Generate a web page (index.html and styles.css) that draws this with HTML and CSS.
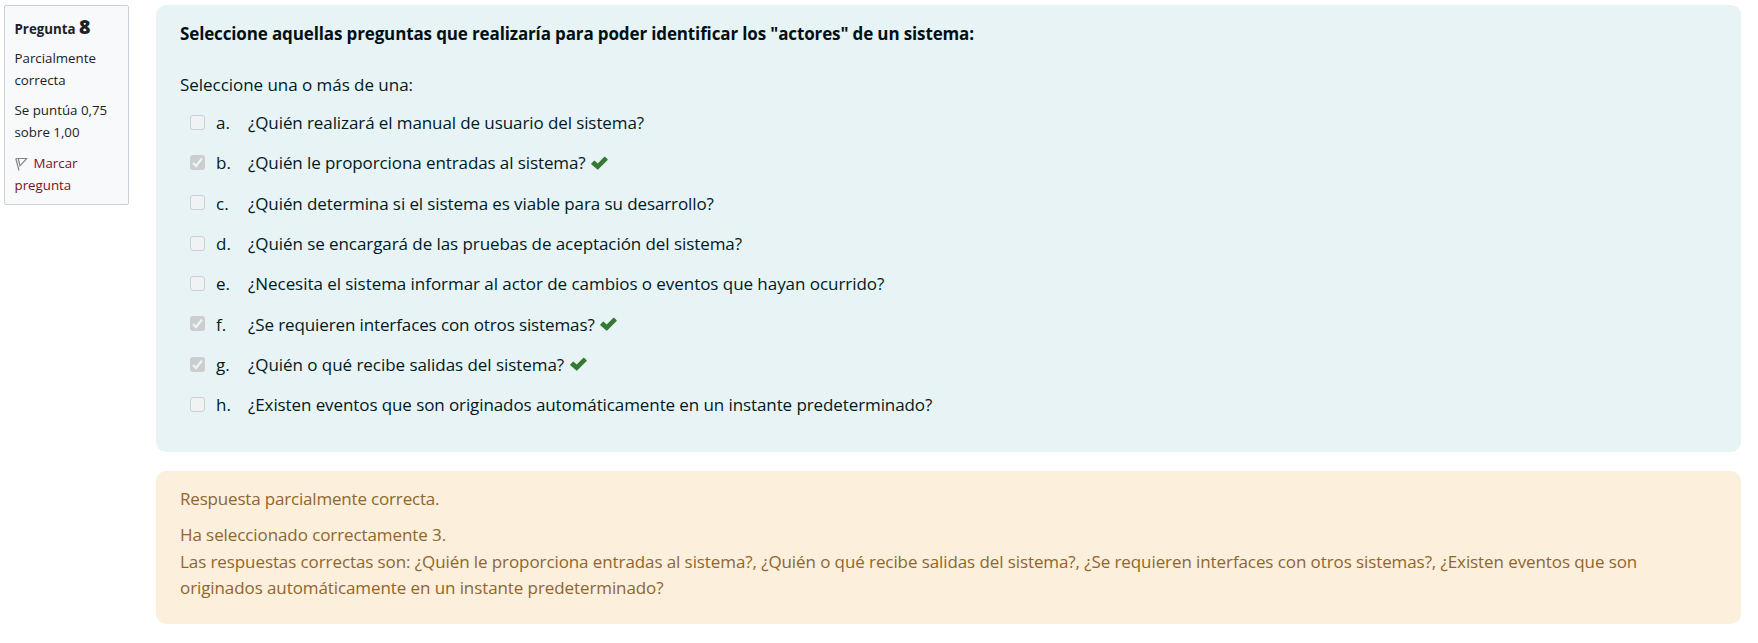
FILE: index.html
```
<!DOCTYPE html>
<html lang="es">
<head>
<meta charset="utf-8">
<title>Pregunta 8</title>
<link rel="stylesheet" href="styles.css">
</head>
<body>
<svg class="defs" width="0" height="0" aria-hidden="true">
  <symbol id="check" viewBox="0 0 17 14"><path d="M.5 7.200 2.700 4.900a.9.9 0 0 1 1.300 0L6.700 7.500 13.100 1a.9.9 0 0 1 1.300 0l2 2a.9.9 0 0 1 0 1.300L7.400 13.300a.9.9 0 0 1-1.300 0L.5 8.500a.9.9 0 0 1 0-1.300z"/></symbol>
</svg>
<main class="question">
  <aside class="info">
    <h3 class="number">Pregunta <b class="qno">8</b></h3>
    <p class="state">Parcialmente<br>correcta</p>
    <p class="grade">Se puntúa 0,75<br>sobre 1,00</p>
    <a class="flag"><svg class="flag-icon" viewBox="0 0 13 14"><path d="M.8 1.500 4 13.500M.8 1.500H11.800L5 8.800 3.300 2"/></svg>Marcar<br>pregunta</a>
  </aside>
  <section class="content">
    <div class="formulation">
      <h4 class="qtext">Seleccione aquellas preguntas que realizaría para poder identificar los "actores" de un sistema:</h4>
      <p class="prompt">Seleccione una o más de una:</p>
      <ul class="answers">
        <li class="answer"><i class="box"></i><span class="letter">a.</span><span class="text">¿Quién realizará el manual de usuario del sistema?</span></li>
        <li class="answer"><i class="box on"><svg viewBox="0 0 15 15"><path d="M3 8 6 11 12 3.500"/></svg></i><span class="letter">b.</span><span class="text">¿Quién le proporciona entradas al sistema?</span><svg class="ok"><use href="#check"/></svg></li>
        <li class="answer"><i class="box"></i><span class="letter">c.</span><span class="text">¿Quién determina si el sistema es viable para su desarrollo?</span></li>
        <li class="answer"><i class="box"></i><span class="letter">d.</span><span class="text loose">¿Quién se encargará de las pruebas de aceptación del sistema?</span></li>
        <li class="answer"><i class="box"></i><span class="letter">e.</span><span class="text looser">¿Necesita el sistema informar al actor de cambios o eventos que hayan ocurrido?</span></li>
        <li class="answer"><i class="box on"><svg viewBox="0 0 15 15"><path d="M3 8 6 11 12 3.500"/></svg></i><span class="letter">f.</span><span class="text tight">¿Se requieren interfaces con otros sistemas?</span><svg class="ok"><use href="#check"/></svg></li>
        <li class="answer"><i class="box on"><svg viewBox="0 0 15 15"><path d="M3 8 6 11 12 3.500"/></svg></i><span class="letter">g.</span><span class="text looser">¿Quién o qué recibe salidas del sistema?</span><svg class="ok"><use href="#check"/></svg></li>
        <li class="answer"><i class="box"></i><span class="letter">h.</span><span class="text">¿Existen eventos que son originados automáticamente en un instante predeterminado?</span></li>
      </ul>
    </div>
    <div class="feedback">
      <p class="result">Respuesta parcialmente correcta.</p>
      <p class="detail">Ha seleccionado correctamente 3.<br>Las respuestas correctas son: ¿Quién le proporciona entradas al sistema?, ¿Quién o qué recibe salidas del sistema?, ¿Se requieren interfaces con otros sistemas?, ¿Existen eventos que son<br>originados automáticamente en un instante predeterminado?</p>
    </div>
  </section>
</main>
</body>
</html>
```
FILE: styles.css
```
* { box-sizing: border-box; margin: 0; padding: 0; }
body {
  width: 1758px;
  height: 643px;
  overflow: hidden;
  background: #fff;
  color: #001a1e;
  font: 17px/27px "Segoe UI", "Open Sans", "Noto Sans", sans-serif;
}
.defs { display: block; }
.question { display: flex; align-items: flex-start; gap: 27px; padding: 5px 17px 0 4px; }
.info {
  width: 125px;
  height: 200px;
  padding: 8px 9.500px 0;
  border: 1px solid #cad0d7;
  border-radius: 2px;
  background: #f8f9fa;
  color: #1d2125;
  font-size: 13.3px;
  line-height: 21.500px;
  white-space: nowrap;
}
.number { font-size: 13.3px; line-height: 26px; font-weight: 700; }
.qno { font-size: 19.500px; }
.state { margin-top: 6px; }
.grade { margin-top: 9px; }
.flag { display: block; margin-top: 10px; color: #7d1022; }
.flag-icon { width: 13px; height: 14px; margin-right: 6px; vertical-align: -3px; fill: none; stroke: #858585; stroke-width: 1.2; }
.content { flex: 1; display: flex; flex-direction: column; gap: 19px; }
.formulation, .feedback { padding-left: 24px; border-radius: 10px; white-space: nowrap; }
.formulation { height: 447px; padding-top: 15px; background: #e7f3f5; }
.qtext { font-size: 17px; line-height: 27px; font-weight: 700; letter-spacing: -.135px; color: #001014; }
.prompt { margin-top: 24px; letter-spacing: -.04px; }
.answers { list-style: none; margin-top: 4.400px; }
.answer { display: flex; align-items: center; height: 40.35px; padding-left: 10px; }
.box { width: 15px; height: 15px; margin: 0 11px .8px 0; border: 1px solid #cdd0d1; border-radius: 3px; background: #eff3f4; }
.box.on { border: 0; background: #cbcdce; }
.box svg { display: block; width: 15px; height: 15px; fill: none; stroke: #eff3f4; stroke-width: 2.200; }
.letter { width: 32px; }
.text { letter-spacing: -.095px; }
.text.tight { letter-spacing: -.115px; }
.text.loose { letter-spacing: -.07px; }
.text.looser { letter-spacing: -.05px; }
.ok { width: 17px; height: 14px; margin: 0 0 .5px 5.500px; fill: #357a32; }
.feedback { height: 153px; padding-top: 14.400px; background: #fcefdc; color: #8f662e; }
.result { letter-spacing: -.18px; }
.detail { margin-top: 9px; line-height: 26.800px; padding-top: .5px; letter-spacing: -.092px; }
```
